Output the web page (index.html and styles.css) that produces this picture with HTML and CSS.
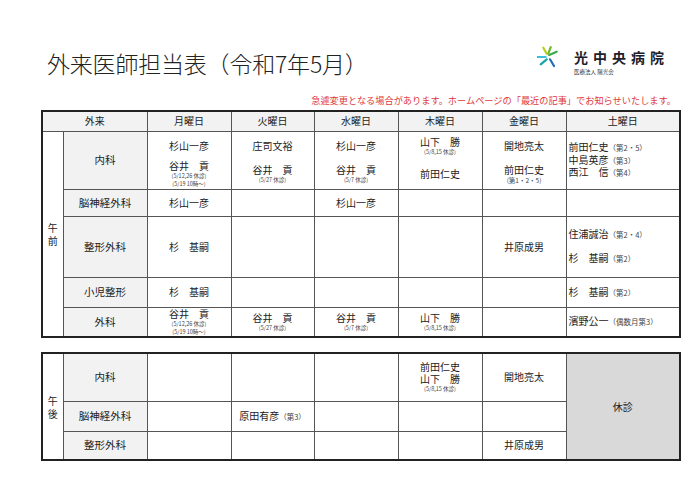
FILE: index.html
```html
<!DOCTYPE html>
<html lang="ja">
<head>
<meta charset="utf-8">
<link rel="stylesheet" href="styles.css">
</head>
<body>
<div class="page">
  <div class="header">
    <h1 class="title">外来医師担当表（令和7年5月）</h1>
    <div class="logo">
      <svg class="logo-mark" width="24" height="24" viewBox="0 0 24 24">
        <g stroke-width="2.2" stroke-linecap="round" fill="none">
          <line x1="6.3" y1="1.7" x2="9.7" y2="7.7" stroke="#b7cf1e"/>
          <line x1="13.7" y1="1.2" x2="11.3" y2="7.7" stroke="#6cbb2f"/>
          <line x1="12.2" y1="9" x2="19.7" y2="5.7" stroke="#3aab4c"/>
          <line x1="0.6" y1="11" x2="8.7" y2="11" stroke="#3cbde0"/>
          <line x1="3.7" y1="18.3" x2="9.7" y2="13.3" stroke="#17a7a4"/>
          <line x1="13" y1="13.3" x2="17" y2="20" stroke="#1e6fb9"/>
        </g>
      </svg>
      <div class="logo-text">
        <div class="logo-name">光中央病院</div>
        <div class="logo-sub">医療法人 陽光会</div>
      </div>
    </div>
  </div>
  <p class="notice">急遽変更となる場合があります。ホームページの「最近の記事」でお知らせいたします。</p>

  <table class="sched am">
    <colgroup>
      <col class="c-time"><col class="c-dept"><col class="c-day"><col class="c-day2"><col class="c-day"><col class="c-day"><col class="c-day"><col class="c-sat">
    </colgroup>
    <tr class="r-head">
      <th colspan="2" class="gray">外来</th>
      <th class="gray">月曜日</th><th class="gray">火曜日</th><th class="gray">水曜日</th><th class="gray">木曜日</th><th class="gray">金曜日</th><th class="gray">土曜日</th>
    </tr>
    <tr class="r-naika">
      <td rowspan="5" class="time"><span>午</span><span>前</span></td>
      <td class="dept">内科</td>
      <td><div class="halves"><div class="half">杉山一彦</div><div class="half">谷井　貢<span class="note">(5/12,26 休診)</span><span class="note">(5/19 10時～)</span></div></div></td>
      <td><div class="halves"><div class="half">庄司文裕</div><div class="half">谷井　貢<span class="note">(5/27 休診)</span></div></div></td>
      <td><div class="halves"><div class="half">杉山一彦</div><div class="half">谷井　貢<span class="note">(5/7 休診)</span></div></div></td>
      <td><div class="halves"><div class="half">山下　勝<span class="note">(5/8,15 休診)</span></div><div class="half">前田仁史</div></div></td>
      <td><div class="halves"><div class="half">開地亮太</div><div class="half">前田仁史<span class="sub-small">(第1・2・5)</span></div></div></td>
      <td class="left lines">前田仁史<span class="sub">（第2・5）</span><br>中島英彦<span class="sub">（第3）</span><br>西江　信<span class="sub">（第4）</span></td>
    </tr>
    <tr class="r-nou">
      <td class="dept">脳神経外科</td>
      <td>杉山一彦</td><td></td><td>杉山一彦</td><td></td><td></td><td></td>
    </tr>
    <tr class="r-seikei">
      <td class="dept">整形外科</td>
      <td>杉　基嗣</td><td></td><td></td><td></td><td>井原成男</td>
      <td class="left lines">住浦誠治<span class="sub">（第2・4）</span><br><br>杉　基嗣<span class="sub">（第2）</span></td>
    </tr>
    <tr class="r-shoni">
      <td class="dept">小児整形</td>
      <td>杉　基嗣</td><td></td><td></td><td></td><td></td>
      <td class="left">杉　基嗣<span class="sub">（第2）</span></td>
    </tr>
    <tr class="r-geka">
      <td class="dept">外科</td>
      <td><div class="stack">谷井　貢<span class="note">(5/12,26 休診)</span><span class="note">(5/19 10時～)</span></div></td>
      <td><div class="stack">谷井　貢<span class="note">(5/27 休診)</span></div></td>
      <td><div class="stack">谷井　貢<span class="note">(5/7 休診)</span></div></td>
      <td><div class="stack">山下　勝<span class="note">(5/8,15 休診)</span></div></td>
      <td></td>
      <td class="left">濱野公一<span class="sub">（偶数月第3）</span></td>
    </tr>
  </table>

  <table class="sched pm">
    <colgroup>
      <col class="c-time"><col class="c-dept"><col class="c-day"><col class="c-day2"><col class="c-day"><col class="c-day"><col class="c-day"><col class="c-sat">
    </colgroup>
    <tr class="r-pm1">
      <td rowspan="3" class="time"><span>午</span><span>後</span></td>
      <td class="dept">内科</td>
      <td></td><td></td><td></td>
      <td><div class="stack">前田仁史<span class="name2">山下　勝</span><span class="note">(5/8,15 休診)</span></div></td>
      <td>開地亮太</td>
      <td rowspan="3" class="closed">休診</td>
    </tr>
    <tr class="r-pm2">
      <td class="dept">脳神経外科</td>
      <td></td><td>原田有彦<span class="sub">（第3）</span></td><td></td><td></td><td></td>
    </tr>
    <tr class="r-pm3">
      <td class="dept">整形外科</td>
      <td></td><td></td><td></td><td></td><td>井原成男</td>
    </tr>
  </table>
</div>
</body>
</html>
```

FILE: styles.css
```css
* { box-sizing: border-box; }
html, body { margin: 0; padding: 0; background: #fff; }
body {
  font-family: "Noto Sans CJK JP", "Noto Sans", sans-serif;
  color: #222;
  width: 700px;
  height: 495px;
  overflow: hidden;
}
.page { padding: 0 21px 0 41px; }

.header {
  display: flex;
  justify-content: space-between;
  align-items: flex-start;
  padding-top: 46px;
  height: 86px;
}
.title {
  margin: 0 0 0 6px;
  font-size: 23px;
  font-weight: 300;
  line-height: 34px;
  color: #222;
  letter-spacing: -0.2px;
}
.logo {
  display: flex;
  align-items: flex-start;
  margin-right: 10px;
}
.logo-mark { display: block; margin-right: 13px; }
.logo-text { display: flex; flex-direction: column; padding-top: 4px; }
.logo-name {
  font-size: 14px;
  font-weight: 700;
  letter-spacing: 5px;
  line-height: 15px;
  color: #1d1d2b;
  white-space: nowrap;
}
.logo-sub {
  font-size: 5.5px;
  line-height: 8px;
  margin-top: 3px;
  color: #333;
}

.notice {
  margin: 8px 0 0 0;
  text-align: right;
  padding-right: 3px;
  font-size: 9.2px;
  line-height: 12px;
  color: #e0383a;
}

.sched {
  border-collapse: collapse;
  table-layout: fixed;
  width: 638px;
  border: 2px solid #222;
  font-size: 10px;
  line-height: 12px;
}
.am { margin-top: 4px; }
.pm { margin-top: 14px; }
.c-time { width: 21px; }
.c-dept { width: 84px; }
.c-day { width: 84px; }
.c-day2 { width: 83px; }
.c-sat { width: 114px; }

.sched th, .sched td {
  border: 1px solid #555;
  padding: 0;
  text-align: center;
  vertical-align: middle;
  font-weight: 400;
}
.sched th { font-size: 10px; }
.sched .gray { background: #f2f2f2; }
.sched .dept { background: #f2f2f2; font-size: 10.5px; }
.sched .time { background: #fff; font-size: 10px; line-height: 13px; }
.time span { display: block; }

.r-head { height: 20px; }
.r-naika { height: 58px; }
.r-nou { height: 27px; }
.r-seikei { height: 61px; }
.r-shoni { height: 30px; }
.r-geka { height: 30px; }
.r-pm1 { height: 48px; }
.r-pm2 { height: 30px; }
.r-pm3 { height: 29px; }

.halves {
  display: flex;
  flex-direction: column;
  height: 57px;
}
.half {
  flex: 1;
  display: flex;
  flex-direction: column;
  justify-content: center;
  align-items: center;
  line-height: 12px;
}
.stack {
  display: flex;
  flex-direction: column;
  align-items: center;
  justify-content: center;
  line-height: 12px;
}
.name2 { display: block; line-height: 12px; }
.note {
  display: block;
  font-size: 5.5px;
  line-height: 8px;
  color: #444;
}
.sub-small {
  display: block;
  font-size: 6.5px;
  line-height: 9px;
  color: #444;
}
.sub {
  font-size: 7.5px;
  color: #444;
}
.sched td.left { text-align: left; padding-left: 2px; }
.sched td.lines { line-height: 11.5px; }
.sched td.closed { background: #d9d9d9; }
```
